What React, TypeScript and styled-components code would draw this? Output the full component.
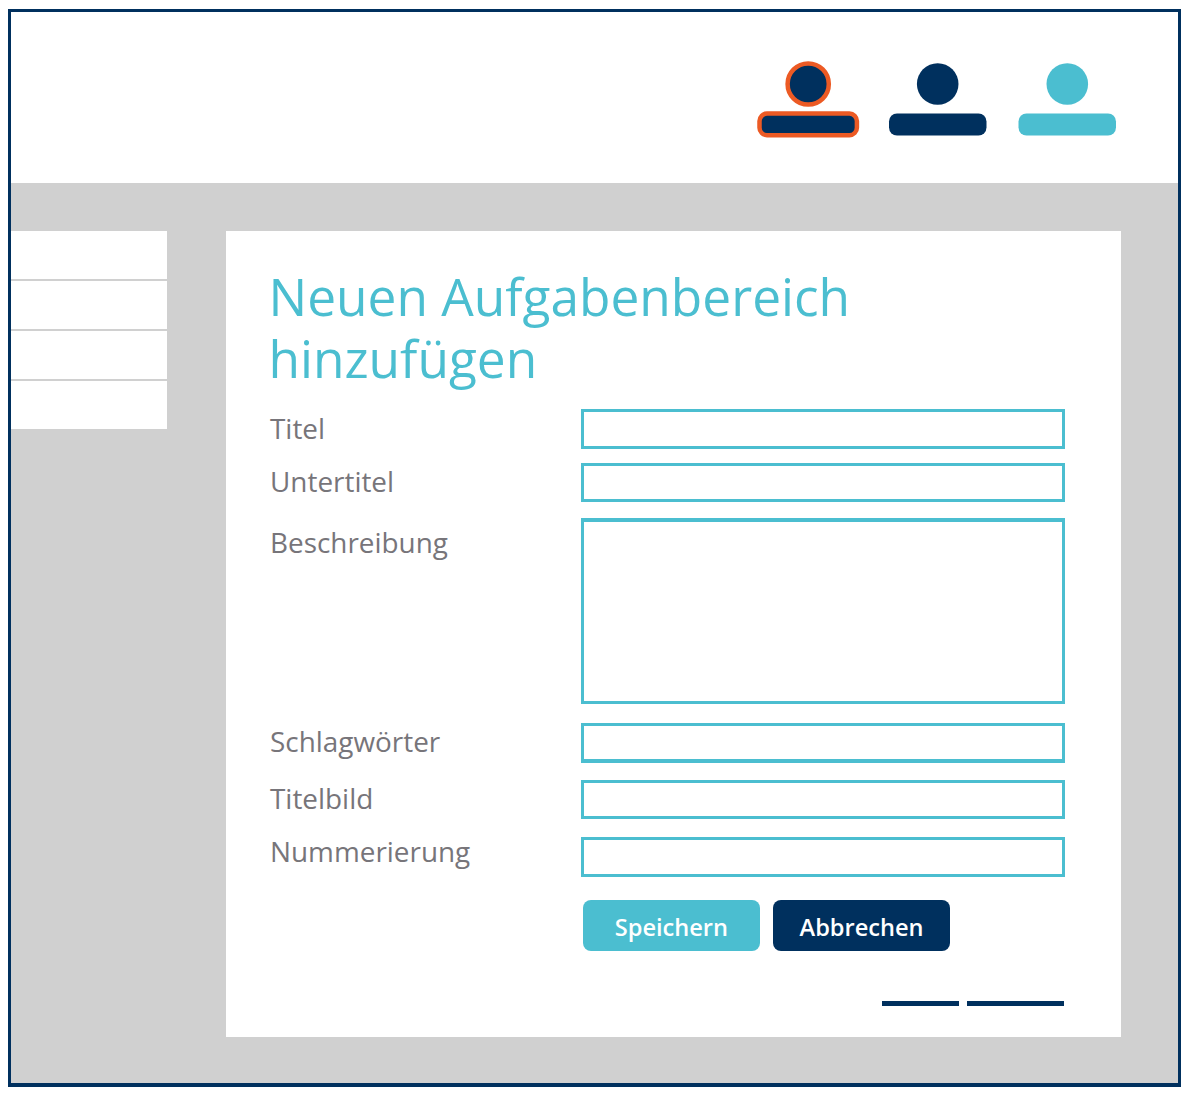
import React from 'react';
import styled, { createGlobalStyle } from 'styled-components';

const navy = '#00305e';
const teal = '#4bbed0';
const orange = '#ec5a24';
const grey = '#d0d0d0';

const GlobalStyle = createGlobalStyle`
  *, *::before, *::after { box-sizing: border-box; }
  body {
    margin: 0;
    background: #fff;
    font-family: 'Open Sans', 'Noto Sans', sans-serif;
  }
`;

const Frame = styled.div`
  display: flex;
  flex-direction: column;
  width: 1173px;
  height: 1078px;
  margin: 9px 8px;
  border: 3px solid ${navy};
  border-bottom-width: 4px;
`;

const Header = styled.header`
  display: flex;
  justify-content: flex-end;
  height: 171px;
  padding: 48px 61px 0 0;
`;

const Users = styled.svg`
  display: block;
  width: 362px;
  height: 80px;
`;

const Body = styled.main`
  display: flex;
  flex: 1;
  align-items: flex-start;
  justify-content: space-between;
  padding: 48px 57px 0 0;
  background: ${grey};
`;

const Sidebar = styled.nav`
  display: flex;
  flex-direction: column;
  gap: 2px;
  width: 156px;
`;

const SidebarItem = styled.div`
  height: 48px;
  background: #fff;
`;

const Panel = styled.section`
  display: flex;
  flex-direction: column;
  width: 895px;
  height: 806px;
  padding: 34px 56px 31px 44px;
  background: #fff;
`;

const Title = styled.h1`
  width: 640px;
  height: 144px;
  margin: 0 0 0 -1.5px;
  color: ${teal};
  font-size: 51.4px;
  font-weight: 400;
  line-height: 62px;
`;

const Row = styled.div<{ $gap: number }>`
  display: grid;
  grid-template-columns: 311px 484px;
  align-items: start;
  margin-bottom: ${(p) => p.$gap}px;
`;

const Label = styled.label<{ $shift: number }>`
  height: 38px;
  margin: ${(p) => p.$shift}px 0 ${(p) => -p.$shift}px;
  color: #77757a;
  font-size: 27.9px;
  line-height: 38px;
`;

const Input = styled.input<{ $height: number; $bottom?: number }>`
  display: block;
  width: 100%;
  height: ${(p) => p.$height}px;
  padding: 0 8px;
  border: 3px solid ${teal};
  border-bottom-width: ${(p) => p.$bottom ?? 3}px;
  border-radius: 0;
  background: #fff;
  outline: none;
`;

const TextArea = styled.textarea`
  display: block;
  width: 100%;
  height: 186px;
  padding: 8px;
  border: 3px solid ${teal};
  border-top-width: 4px;
  border-radius: 0;
  resize: none;
  outline: none;
`;

const Actions = styled.div`
  display: flex;
  gap: 12.6px;
  padding-left: 312.6px;
`;

const Button = styled.button<{ $color: string }>`
  width: 177.6px;
  height: 51px;
  padding: 3px 0 0;
  border: 0;
  border-radius: 8px;
  background: ${(p) => p.$color};
  color: #fff;
  font-family: inherit;
  font-size: 23.6px;
  font-weight: 580;
`;

const Footer = styled.footer`
  display: flex;
  justify-content: flex-end;
  gap: 8px;
  margin-top: auto;
  padding-right: 1px;
`;

const FooterLink = styled.span<{ $width: number }>`
  width: ${(p) => p.$width}px;
  height: 5px;
  background: ${navy};
`;

type Field = {
  id: string;
  label: string;
  gap: number;
  shift: number;
  height?: number;
  bottom?: number;
};

const fields: Field[] = [
  { id: 'title', label: 'Titel', gap: 14, shift: 0, height: 40 },
  { id: 'subtitle', label: 'Untertitel', gap: 16, shift: -1, height: 39 },
  { id: 'description', label: 'Beschreibung', gap: 19, shift: 5 },
  { id: 'tags', label: 'Schlagwörter', gap: 17, shift: -1, height: 40, bottom: 4 },
  { id: 'image', label: 'Titelbild', gap: 18, shift: -1, height: 39 },
  { id: 'numbering', label: 'Nummerierung', gap: 23, shift: -5, height: 40 },
];

function UserIcons() {
  return (
    <Users viewBox="755 60 362 80" aria-hidden="true">
      <g fill={navy} stroke={orange} strokeWidth="4.5">
        <circle cx="808.2" cy="84" r="20.6" />
        <rect x="759.5" y="113.6" width="97.4" height="21.6" rx="7.5" />
      </g>
      <g fill={navy}>
        <circle cx="937.7" cy="84" r="20.8" />
        <rect x="889" y="113.4" width="97.5" height="22.2" rx="8" />
      </g>
      <g fill={teal}>
        <circle cx="1067.3" cy="84" r="20.8" />
        <rect x="1018.5" y="113.4" width="97.5" height="22.2" rx="8" />
      </g>
    </Users>
  );
}

export default function App() {
  return (
    <>
      <GlobalStyle />
      <Frame>
        <Header>
          <UserIcons />
        </Header>
        <Body>
          <Sidebar>
            {[0, 1, 2, 3].map((i) => (
              <SidebarItem key={i} />
            ))}
          </Sidebar>
          <Panel>
            <Title>Neuen Aufgabenbereich hinzufügen</Title>
            {fields.map((f) => (
              <Row key={f.id} $gap={f.gap}>
                <Label htmlFor={f.id} $shift={f.shift}>{f.label}</Label>
                {f.height ? (
                  <Input id={f.id} $height={f.height} $bottom={f.bottom} />
                ) : (
                  <TextArea id={f.id} />
                )}
              </Row>
            ))}
            <Actions>
              <Button type="button" $color={teal}>Speichern</Button>
              <Button type="button" $color={navy}>Abbrechen</Button>
            </Actions>
            <Footer>
              <FooterLink $width={77} />
              <FooterLink $width={97} />
            </Footer>
          </Panel>
        </Body>
      </Frame>
    </>
  );
}
